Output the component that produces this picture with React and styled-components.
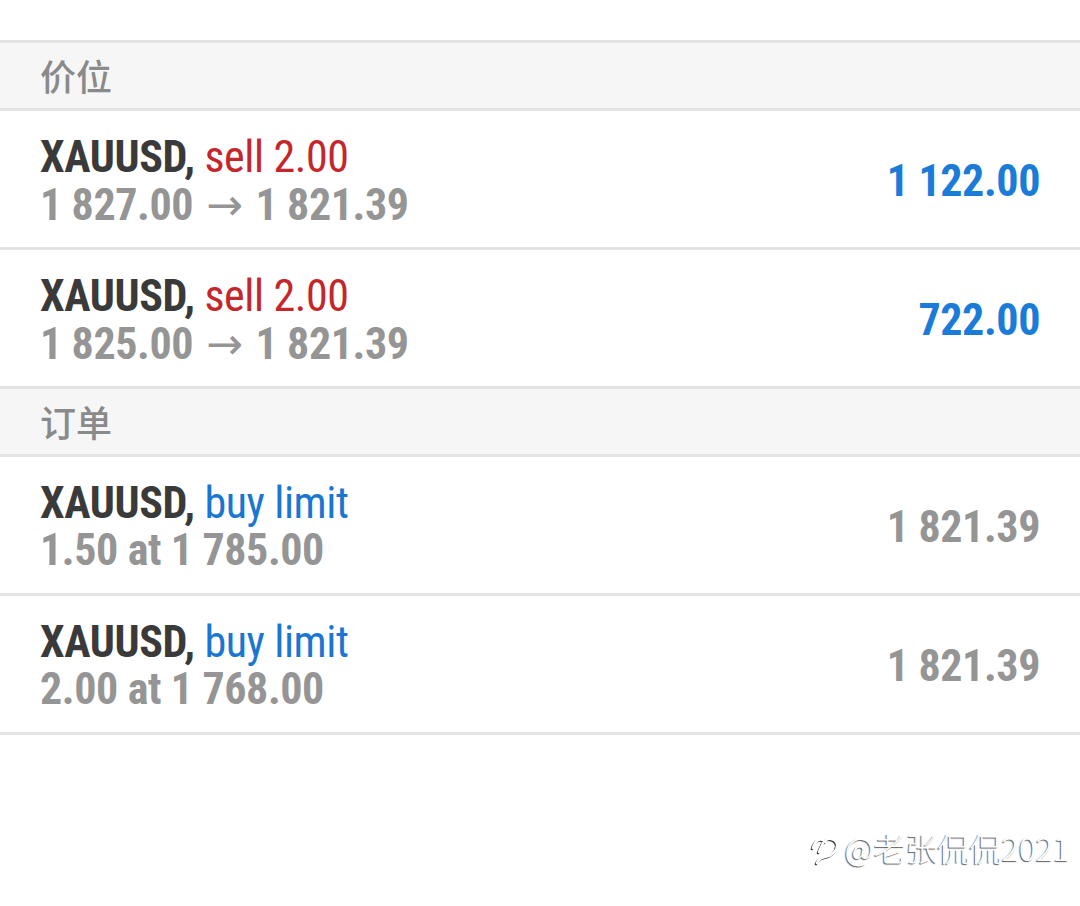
import React from "react";
import styled, { createGlobalStyle } from "styled-components";

const Global = createGlobalStyle`
  html, body { margin: 0; padding: 0; background: #ffffff; }
  body { font-family: Roboto, "Noto Sans CJK SC", sans-serif; }
`;

const Page = styled.div`
  position: relative;
  width: 1080px;
  height: 906px;
  overflow: hidden;
  background: #ffffff;
  padding-top: 40px;
  box-sizing: border-box;
`;

const List = styled.div`
  display: flex;
  flex-direction: column;
  border-bottom: 3px solid #e3e3e3;
`;

const SectionHeader = styled.div`
  display: flex;
  align-items: center;
  height: 63px;
  padding: 0 40px 2px;
  background: #f6f6f6;
  border-top: 3px solid #e3e3e3;
  color: #8a8a8a;
  font-family: "Noto Sans CJK SC", sans-serif;
  font-size: 36px;
  font-weight: 500;
`;

const Row = styled.div`
  display: flex;
  align-items: center;
  justify-content: space-between;
  height: 132px;
  padding: 4px 40px 0;
  border-top: 3px solid #e3e3e3;
  background: #ffffff;
`;

const Info = styled.div`
  display: flex;
  flex-direction: column;
  font-family: Roboto, sans-serif;
  font-stretch: 75%;
  font-size: 44px;
  line-height: 47px;
  letter-spacing: -0.4px;
  white-space: nowrap;
`;

const Line = styled.div`
  display: block;
`;

const Symbol = styled.span`
  font-weight: 700;
  color: #3a3a3a;
`;

const Action = styled.span`
  font-weight: 400;
  color: ${(p) => (p.$type === "sell" ? "#c4262b" : "#1976d2")};
`;

const Detail = styled.span`
  font-weight: 700;
  color: #959595;
`;

const Arrow = styled.span`
  font-family: "DejaVu Sans", sans-serif;
  font-stretch: normal;
  font-weight: 400;
  font-size: 44px;
  letter-spacing: 0;
  margin: 0 3px;
`;

const Value = styled.div`
  font-family: Roboto, sans-serif;
  font-stretch: 75%;
  font-size: 44px;
  letter-spacing: -0.4px;
  font-weight: 700;
  color: ${(p) => (p.$active ? "#1a7bd8" : "#959595")};
  white-space: nowrap;
`;

const Watermark = styled.div`
  position: absolute;
  right: 10px;
  bottom: 36px;
  display: flex;
  align-items: center;
  gap: 2px;
  color: #ffffff;
  font-family: "Noto Sans CJK SC", sans-serif;
  font-size: 32px;
  font-weight: 300;
  text-shadow: -1px 1px 1px rgba(0, 0, 0, 0.65);
`;

const WmIcon = styled.svg`
  width: 32px;
  height: 36px;
  filter: drop-shadow(-1px 1px 0.7px rgba(0, 0, 0, 0.8));
`;

const positions = [
  { sym: "XAUUSD,", act: "sell 2.00", type: "sell", from: "1 827.00", to: "1 821.39", value: "1 122.00", active: true },
  { sym: "XAUUSD,", act: "sell 2.00", type: "sell", from: "1 825.00", to: "1 821.39", value: "722.00", active: true },
];

const orders = [
  { sym: "XAUUSD,", act: "buy limit", type: "buy", detail: "1.50 at 1 785.00", value: "1 821.39", active: false },
  { sym: "XAUUSD,", act: "buy limit", type: "buy", detail: "2.00 at 1 768.00", value: "1 821.39", active: false },
];

function TradeRow({ item }) {
  return (
    <Row>
      <Info>
        <Line>
          <Symbol>{item.sym}</Symbol> <Action $type={item.type}>{item.act}</Action>
        </Line>
        <Line>
          {item.detail ? (
            <Detail>{item.detail}</Detail>
          ) : (
            <Detail>
              {item.from} <Arrow>→</Arrow> {item.to}
            </Detail>
          )}
        </Line>
      </Info>
      <Value $active={item.active}>{item.value}</Value>
    </Row>
  );
}

export default function App() {
  return (
    <Page>
      <Global />
      <List>
        <SectionHeader>价位</SectionHeader>
        {positions.map((p, i) => (
          <TradeRow key={"p" + i} item={p} />
        ))}
        <SectionHeader>订单</SectionHeader>
        {orders.map((o, i) => (
          <TradeRow key={"o" + i} item={o} />
        ))}
      </List>
      <Watermark>
        <WmIcon viewBox="0 0 32 36" fill="none" stroke="#ffffff" strokeWidth="2.6" strokeLinecap="round" strokeLinejoin="round">
          <path d="M3 19 C5 11 11 8 15 13 C17 8 25 9 27 15 C28 22 21 27 15 28 C11 29 8 31 7 34" />
          <path d="M13 14 L9 23" />
        </WmIcon>
        <span>@老张侃侃2021</span>
      </Watermark>
    </Page>
  );
}
